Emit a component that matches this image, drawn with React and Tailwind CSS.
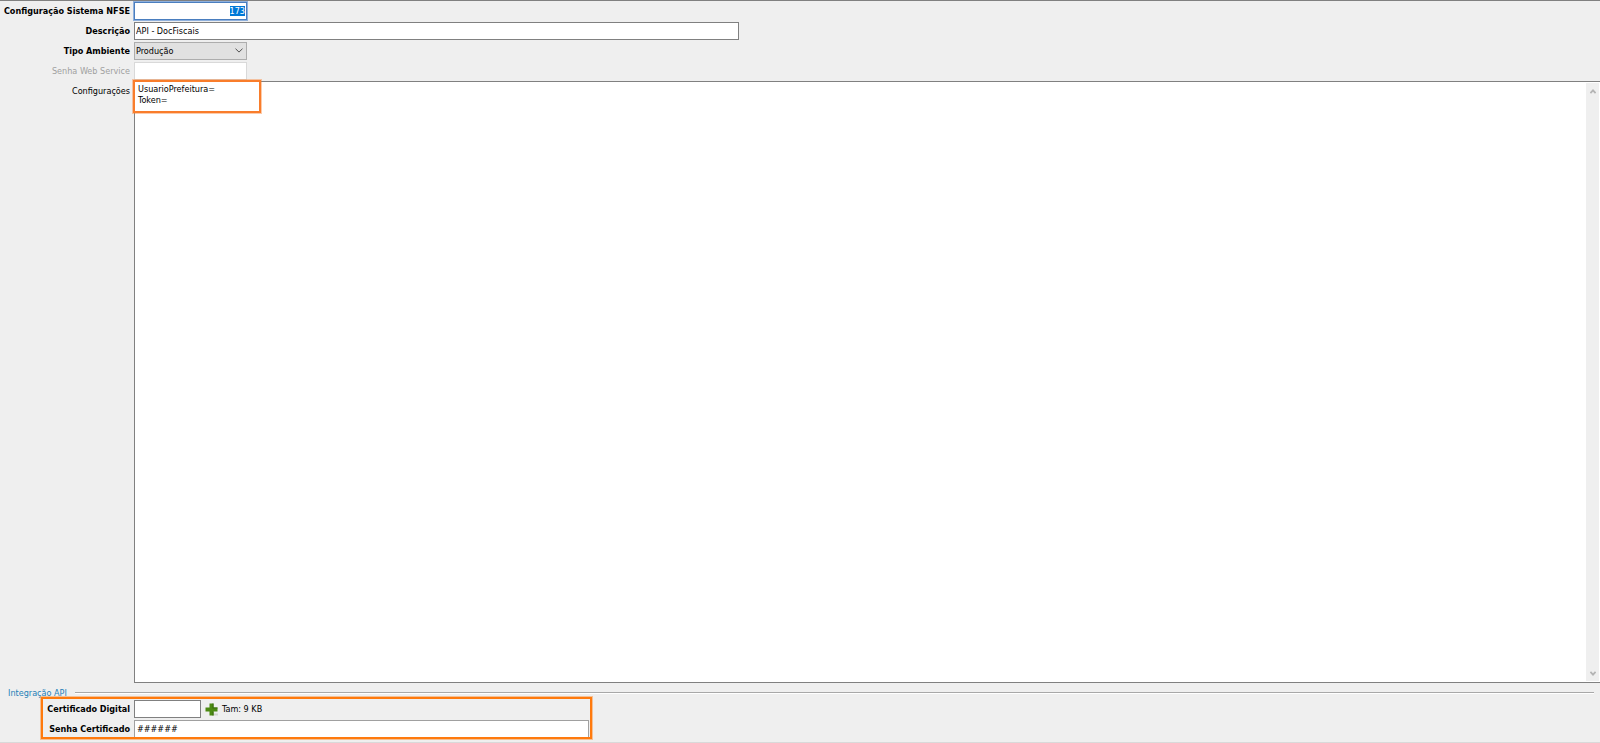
import React, { useEffect, useRef, useState } from 'react';

const fieldBase = 'h-[18px] border bg-white pb-px text-black outline-none';

const Row = ({ id, label, bold = true, disabled, children }) => (
  <div className="flex h-5 items-center">
    <label
      htmlFor={id}
      className={`w-[130px] shrink-0 whitespace-nowrap text-right ${bold ? 'font-bold' : ''} ${disabled ? 'text-[#a0a0a0]' : 'text-black'}`}
    >
      {label}
    </label>
    <div className="ml-1 flex min-w-0 flex-1 items-center">{children}</div>
  </div>
);

const Chevron = ({ className }) => (
  <svg viewBox="0 0 8 5" className={className} fill="none" stroke="currentColor">
    <path d="M0.5 0.7 L4 4.1 L7.5 0.7" />
  </svg>
);

// Thicker arrow used by the scroll bar buttons
const ScrollArrow = ({ up }) => (
  <svg viewBox="0 0 6 5" className="h-[5px] w-1.5" fill="none" stroke="currentColor" strokeWidth="1.8">
    <path d={up ? 'M0.4 4.2 L3 1.4 L5.6 4.2' : 'M0.4 0.8 L3 3.6 L5.6 0.8'} />
  </svg>
);

const App = () => {
  const codeRef = useRef(null);
  const [form, setForm] = useState({
    codigo: '173',
    descricao: 'API - DocFiscais',
    ambiente: 'producao',
    configuracoes: 'UsuarioPrefeitura=\nToken=',
    certificado: '',
    senhaCertificado: '######',
  });

  useEffect(() => {
    // Start with the record code focused and selected
    codeRef.current.focus();
    codeRef.current.select();
  }, []);

  const handleChange = (e) => {
    setForm({ ...form, [e.target.name]: e.target.value });
  };

  return (
    <div className="flex h-screen min-h-80 flex-col overflow-hidden border-t border-[#808080] bg-[#efefef] font-['DejaVu_Sans_Condensed','DejaVu_Sans',sans-serif] text-[9px] leading-3 text-black">
      <Row id="codigo" label="Configuração Sistema NFSE">
        <input
          id="codigo"
          name="codigo"
          ref={codeRef}
          value={form.codigo}
          onChange={handleChange}
          className={`${fieldBase} w-[113px] border-[#4a7ebf] px-px text-right ring-1 ring-[#8fb0dc] selection:bg-[#0078d7] selection:text-white`}
        />
      </Row>
      <Row id="descricao" label="Descrição">
        <input
          id="descricao"
          name="descricao"
          value={form.descricao}
          onChange={handleChange}
          className={`${fieldBase} w-[605px] border-[#808080] px-px`}
        />
      </Row>
      <Row id="ambiente" label="Tipo Ambiente">
        <div className="relative">
          <select
            id="ambiente"
            name="ambiente"
            value={form.ambiente}
            onChange={handleChange}
            className="block h-[18px] w-[113px] appearance-none border border-[#adadad] bg-[#e1e1e1] px-px outline-none"
          >
            <option value="producao">Produção</option>
            <option value="homologacao">Homologação</option>
          </select>
          <Chevron className="pointer-events-none absolute right-1 top-1.5 h-[5px] w-2 text-[#505050]" />
        </div>
      </Row>
      <Row id="senhaWs" label="Senha Web Service" bold={false} disabled>
        <input
          id="senhaWs"
          type="password"
          disabled
          className={`${fieldBase} w-[113px] border-[#d9d9d9] px-px`}
        />
      </Row>

      <div className="flex min-h-0 flex-1">
        <label htmlFor="configuracoes" className="w-[130px] shrink-0 pt-1 text-right">
          Configurações
        </label>
        <div className="relative ml-1 flex min-w-0 flex-1 border-y border-l border-[#808080] bg-white">
          <textarea
            id="configuracoes"
            name="configuracoes"
            value={form.configuracoes}
            onChange={handleChange}
            spellCheck={false}
            className="min-w-0 flex-1 resize-none overflow-hidden px-[3px] py-0.5 leading-[11px] outline-none"
          />
          <div className="my-px mr-px flex w-[13px] flex-col justify-between bg-[#efefef] text-[#b4b4b4]">
            <button type="button" aria-label="Rolar para cima" className="flex h-4 items-center justify-center">
              <ScrollArrow up />
            </button>
            <button type="button" aria-label="Rolar para baixo" className="flex h-4 items-center justify-center">
              <ScrollArrow />
            </button>
          </div>
          <div className="pointer-events-none absolute -left-0.5 -top-0.5 h-[33px] w-32 border-2 border-[#f97d2b] ring-1 ring-[#f97d2b]/40" />
        </div>
      </div>

      <section className="border-b border-[#d9d9d9] pb-[3px] pt-1">
        <div className="flex h-3 items-center gap-2 pl-2 pr-1.5">
          <h2 className="text-[#1e7fb8]">Integração API</h2>
          <div className="h-0.5 flex-1 border-b border-t border-b-white border-t-[#a8a8a8]" />
        </div>
        <div className="relative">
          <Row id="certificado" label="Certificado Digital">
            <input
              id="certificado"
              name="certificado"
              value={form.certificado}
              onChange={handleChange}
              className={`${fieldBase} w-[67px] border-[#808080] px-px`}
            />
            <button type="button" aria-label="Adicionar certificado" className="ml-1">
              <svg viewBox="0 0 13 13" className="size-[13px]">
                <path d="M8 10.5h5v2H8z" fill="#d0d4cc" />
                <path d="M4.5 0.5h4v4h4v4h-4v4h-4v-4h-4v-4h4z" fill="#4c8a12" />
                <path d="M7.5 0.5h1v4h4v1h-5zM7.5 8.5h1v4h-1z" fill="#386b0c" />
              </svg>
            </button>
            <span className="ml-1">Tam: 9 KB</span>
          </Row>
          <Row id="senhaCertificado" label="Senha Certificado">
            <input
              id="senhaCertificado"
              name="senhaCertificado"
              value={form.senhaCertificado}
              onChange={handleChange}
              className={`${fieldBase} w-[455px] border-[#a0a0a0] px-0.5`}
            />
          </Row>
          <div className="pointer-events-none absolute -top-0.5 bottom-0 left-[41px] w-[551px] border-2 border-[#ff7a0d] ring-1 ring-[#ff7a0d]/40" />
        </div>
      </section>
    </div>
  );
};

export default App;
